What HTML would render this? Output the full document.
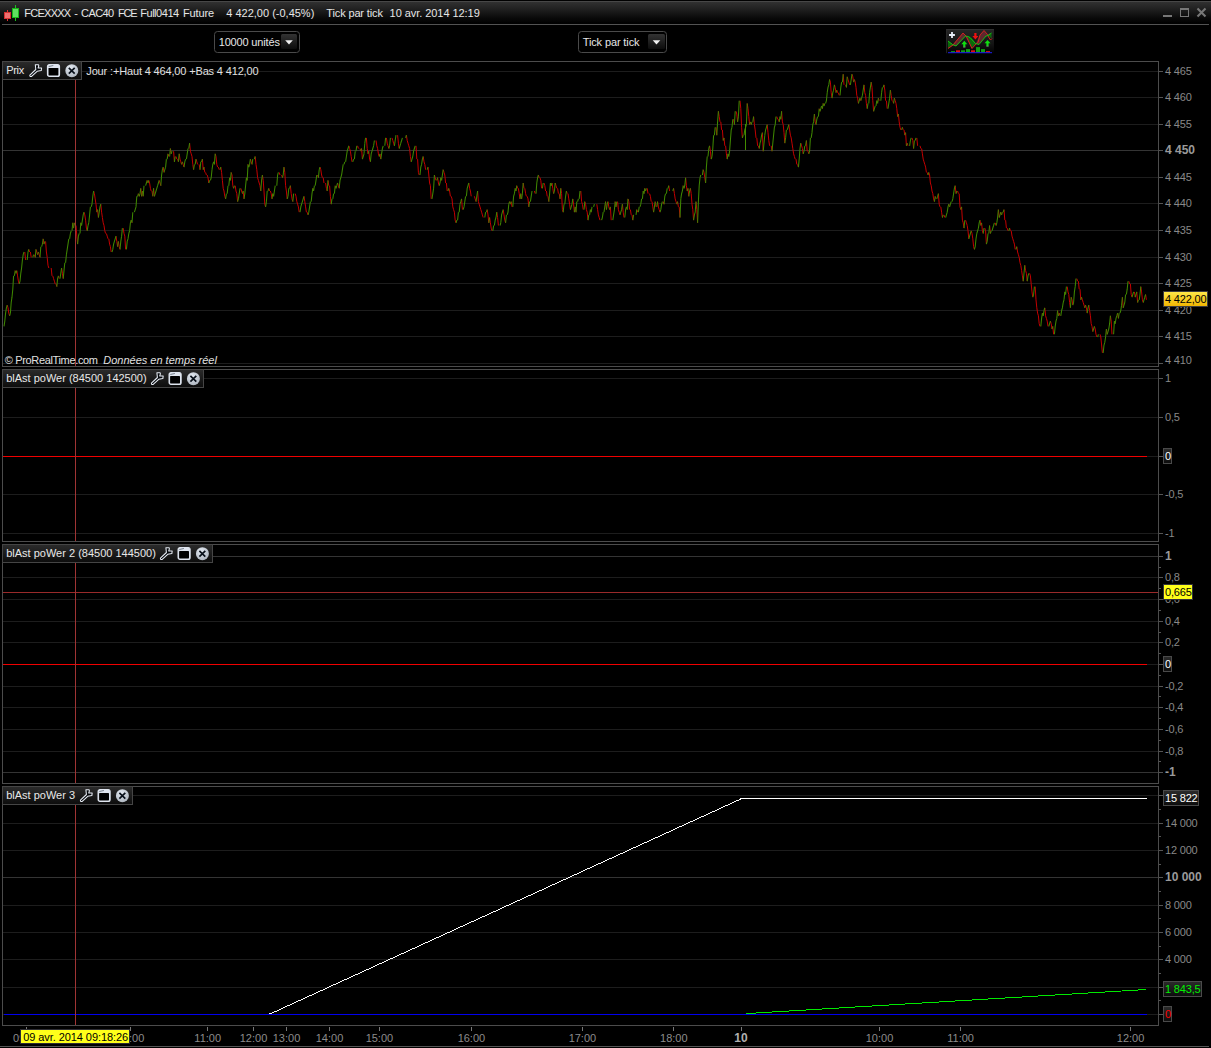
<!DOCTYPE html><html><head><meta charset="utf-8"><title>FCEXXXX - CAC40 FCE Full0414 Future</title>
<style>html,body{margin:0;padding:0;background:#000;overflow:hidden}svg{display:block}text{font-family:"Liberation Sans", Arial, sans-serif;font-size:11px}</style></head><body>
<svg width="1211" height="1048" viewBox="0 0 1211 1048">
<defs>
<linearGradient id="tb" x1="0" y1="0" x2="0" y2="1"><stop offset="0" stop-color="#313131"/><stop offset="0.3" stop-color="#212121"/><stop offset="0.7" stop-color="#0b0b0b"/><stop offset="0.95" stop-color="#000"/></linearGradient>
<linearGradient id="lb" x1="0" y1="0" x2="0" y2="1"><stop offset="0" stop-color="#2b2b2b"/><stop offset="1" stop-color="#0c0c0c"/></linearGradient>
<linearGradient id="bt" x1="0" y1="0" x2="0" y2="1"><stop offset="0" stop-color="#333"/><stop offset="1" stop-color="#0c0c0c"/></linearGradient>
<linearGradient id="yl" x1="0" y1="0" x2="0" y2="1"><stop offset="0" stop-color="#ffe94a"/><stop offset="1" stop-color="#f0b400"/></linearGradient>
<g id="ic-wrench"><path d="M0.95 11.1L6.9 5.5L6.4 0.8L9.55 0.7L9.9 1.9L9.2 3.9L12.7 3.9L12.35 6.6L8.2 7.3L2.7 12.4Q0.6 13.0 0.95 11.1Z" fill="#04070b" stroke="#e9eef6" stroke-width="1.05" stroke-linejoin="round"/></g>
<g id="ic-win"><rect x="0.6" y="0.6" width="12" height="12" rx="2" fill="#dfe5ef" stroke="#dfe5ef" stroke-width="1.2"/><rect x="1.6" y="4.1" width="9.9" height="7.4" rx="0.6" fill="#000"/><path d="M1.8 2.6L6.4 1.6" stroke="#5a6470" stroke-width="0.8"/></g>
<radialGradient id="cg" cx="0.4" cy="0.3" r="0.8"><stop offset="0" stop-color="#e4eaf2"/><stop offset="1" stop-color="#a9b1bb"/></radialGradient>
<g id="ic-close"><circle cx="6.6" cy="6.5" r="6.5" fill="url(#cg)"/><path d="M3.6 3.7L9.5 9.5M9.5 3.7L3.6 9.5" stroke="#08101a" stroke-width="1.7"/></g>
<linearGradient id="ib" x1="0" y1="0" x2="0" y2="1"><stop offset="0" stop-color="#262626"/><stop offset="0.6" stop-color="#141414"/><stop offset="1" stop-color="#000"/></linearGradient>
</defs>
<rect width="1211" height="1048" fill="#000"/>
<rect x="0" y="2" width="1211" height="22" fill="url(#tb)"/>
<rect x="0" y="1" width="1211" height="1" fill="#474747"/>
<rect x="2" y="24" width="1207" height="1" fill="#525252"/>
<rect x="7" y="10" width="1" height="11" fill="#e03030"/><rect x="4.5" y="12.5" width="6" height="6" fill="#f07070" stroke="#d83030" stroke-width="1"/>
<rect x="15" y="5" width="1" height="16" fill="#20c020"/><rect x="12.5" y="8.5" width="6" height="9" fill="#60e060" stroke="#18b818" stroke-width="1"/>
<text y="17" fill="#e6e6e6"><tspan x="24.3" textLength="46.9" lengthAdjust="spacing">FCEXXXX</tspan> <tspan x="74.2" textLength="3.9" lengthAdjust="spacing">-</tspan> <tspan x="81.0" textLength="33.2" lengthAdjust="spacing">CAC40</tspan> <tspan x="117.9" textLength="19.6" lengthAdjust="spacing">FCE</tspan> <tspan x="140.2" textLength="39.0" lengthAdjust="spacing">Full0414</tspan> <tspan x="183.0" textLength="31.2" lengthAdjust="spacing">Future</tspan></text>
<text x="226.3" y="17" fill="#e6e6e6"  textLength="88" lengthAdjust="spacing">4 422,00 (-0,45%)</text>
<text x="326.3" y="17" fill="#e6e6e6"  textLength="56.6" lengthAdjust="spacing">Tick par tick</text>
<text x="389.6" y="17" fill="#e6e6e6"  textLength="90.2" lengthAdjust="spacing">10 avr. 2014 12:19</text>
<rect x="1163" y="15" width="9" height="2" fill="#777"/>
<rect x="1180.5" y="8.5" width="8" height="8" fill="none" stroke="#777"/><rect x="1180" y="8" width="9" height="2" fill="#777"/>
<path d="M1197.5 8.5L1205.5 16.5M1205.5 8.5L1197.5 16.5" stroke="#777" stroke-width="2.1"/>
<rect x="214.5" y="31.5" width="85" height="21" rx="3" fill="#000" stroke="#4a4a4a"/>
<rect x="281" y="34" width="16" height="15" rx="1.5" fill="url(#bt)"/>
<path d="M285.2 40.2h7.6l-3.8 4.3z" fill="#f0f0f0"/>
<text x="218.7" y="46" fill="#e6e6e6"  textLength="61.2" lengthAdjust="spacing">10000 unités</text>
<rect x="578.5" y="31.5" width="88" height="21" rx="3" fill="#000" stroke="#4a4a4a"/>
<rect x="648" y="34" width="17" height="15" rx="1.5" fill="url(#bt)"/>
<path d="M652.7 40.2h7.6l-3.8 4.3z" fill="#f0f0f0"/>
<text x="582.7" y="46" fill="#e6e6e6"  textLength="56.8" lengthAdjust="spacing">Tick par tick</text>
<g transform="translate(946,29)">
<rect x="0" y="0" width="48" height="25" rx="1" fill="url(#ib)"/><rect x="0" y="0.2" width="48" height="0.8" fill="#333"/><rect x="0" y="0.2" width="0.8" height="24" fill="#2a2a2a"/>
<path d="M2 12 L7 15.5 L17 4 L20 7 L26 19.5 L30 14 L34 6 L38 1.5 L41.5 5.5 L46 9.5 L44 4 L40 7 L33 15.5 L30 14.5 L26.5 10.5 L22 7.5 L19.5 7 L10 17 L7 16.5 L2 19.5Z" fill="#6a2a30" opacity="0.85"/>
<path d="M2 12 L2 19 L6.5 15.5Z M21.5 7.5 L26 19 L29.5 14.5 L25 8.5Z M42 6.5 L45.5 4 L45.5 9 L42.5 7Z" fill="#0a6a0a"/>
<path d="M2 19.5 L7 16 L17 4 L20 7 L26 19.5 L30 15 L32 13.5 L34 6 L38 1.5 L41.5 5.5 L42.5 8 L44.5 11 L46 9.5" fill="none" stroke="#e02020" stroke-width="0.9"/>
<path d="M2 12 L6.5 15.5 L10 17 L19.5 7 L22 7.5 L24 8.5 L29.5 14.5 L33 15.5 L40 7 L42 6.5 L45.5 4" fill="none" stroke="#10d010" stroke-width="0.9"/>
<path d="M3.1 6h5.8M6 3.1v5.8" stroke="#e8eef8" stroke-width="1.8"/>
<path d="M17.2 18.2v-3h-1.9l3-3.4 3 3.4h-1.900v3z" fill="#10e010"/><rect x="17.2" y="17.6" width="2.2" height="0.9" fill="#777"/>
<path d="M40.400 17.3v-3h-1.900l3-3.4 3 3.4h-1.900v3z" fill="#10e010"/><rect x="40.4" y="16.700" width="2.2" height="0.9" fill="#777"/>
<path d="M28.300 4v3h-1.900l3 3.400 3-3.400h-1.900V4z" fill="#f01010"/>
<rect x="5" y="22.1" width="4" height="1.2" fill="#10a010"/>
<rect x="10" y="21.3" width="4" height="2" fill="#e01010"/>
<rect x="15" y="21.3" width="4" height="2" fill="#10a010"/>
<rect x="20" y="20.1" width="4" height="3.2" fill="#10a010"/>
<rect x="25" y="21.3" width="4" height="2" fill="#e01010"/>
<rect x="30" y="18.1" width="4" height="5.2" fill="#10a010"/>
<rect x="35" y="20.1" width="4" height="3.2" fill="#10a010"/>
<rect x="40" y="22.1" width="4" height="1.2" fill="#e01010"/>
<rect x="2" y="23.2" width="44" height="1" fill="#2020f0"/>
</g>
<rect x="3" y="71" width="1155" height="1" fill="#1d1d1d"/>
<rect x="3" y="97" width="1155" height="1" fill="#1d1d1d"/>
<rect x="3" y="124" width="1155" height="1" fill="#1d1d1d"/>
<rect x="3" y="150" width="1155" height="1" fill="#343434"/>
<rect x="3" y="177" width="1155" height="1" fill="#1d1d1d"/>
<rect x="3" y="203" width="1155" height="1" fill="#1d1d1d"/>
<rect x="3" y="230" width="1155" height="1" fill="#1d1d1d"/>
<rect x="3" y="257" width="1155" height="1" fill="#1d1d1d"/>
<rect x="3" y="283" width="1155" height="1" fill="#1d1d1d"/>
<rect x="3" y="310" width="1155" height="1" fill="#1d1d1d"/>
<rect x="3" y="336" width="1155" height="1" fill="#1d1d1d"/>
<rect x="3" y="363" width="1155" height="1" fill="#1d1d1d"/>
<rect x="1159" y="71" width="4" height="1" fill="#555"/>
<text x="1165" y="75" fill="#888888"  textLength="26.8" lengthAdjust="spacing">4 465</text>
<rect x="1159" y="97" width="4" height="1" fill="#555"/>
<text x="1165" y="101" fill="#888888"  textLength="26.8" lengthAdjust="spacing">4 460</text>
<rect x="1159" y="124" width="4" height="1" fill="#555"/>
<text x="1165" y="128" fill="#888888"  textLength="26.8" lengthAdjust="spacing">4 455</text>
<rect x="1159" y="150" width="4" height="1" fill="#555"/>
<text x="1165" y="154" fill="#9a9a9a" style="font-weight:bold;font-size:12px">4 450</text>
<rect x="1159" y="177" width="4" height="1" fill="#555"/>
<text x="1165" y="181" fill="#888888"  textLength="26.8" lengthAdjust="spacing">4 445</text>
<rect x="1159" y="203" width="4" height="1" fill="#555"/>
<text x="1165" y="207" fill="#888888"  textLength="26.8" lengthAdjust="spacing">4 440</text>
<rect x="1159" y="230" width="4" height="1" fill="#555"/>
<text x="1165" y="234" fill="#888888"  textLength="26.8" lengthAdjust="spacing">4 435</text>
<rect x="1159" y="257" width="4" height="1" fill="#555"/>
<text x="1165" y="261" fill="#888888"  textLength="26.8" lengthAdjust="spacing">4 430</text>
<rect x="1159" y="283" width="4" height="1" fill="#555"/>
<text x="1165" y="287" fill="#888888"  textLength="26.8" lengthAdjust="spacing">4 425</text>
<rect x="1159" y="310" width="4" height="1" fill="#555"/>
<text x="1165" y="314" fill="#888888"  textLength="26.8" lengthAdjust="spacing">4 420</text>
<rect x="1159" y="336" width="4" height="1" fill="#555"/>
<text x="1165" y="340" fill="#888888"  textLength="26.8" lengthAdjust="spacing">4 415</text>
<rect x="1159" y="363" width="4" height="1" fill="#555"/>
<text x="1165" y="363.6" fill="#888888"  textLength="26.8" lengthAdjust="spacing">4 410</text>
<rect x="2" y="61" width="1157" height="1" fill="#4c4c4c"/>
<rect x="2" y="366" width="1157" height="1" fill="#4c4c4c"/>
<rect x="2" y="61" width="1" height="306" fill="#4c4c4c"/>
<rect x="1158" y="61" width="1" height="306" fill="#4c4c4c"/>
<path d="M7.2 305.1L8.0 307.8M8.0 307.8L8.8 313.1M8.8 313.1L9.6 315.8M15.2 270.6L16.0 273.3M16.8 270.6L17.6 275.9M17.6 275.9L18.4 281.2M18.4 281.2L19.2 283.9M24.8 252.0L25.6 260.0M28.8 249.4L29.6 252.0M30.4 252.0L31.2 257.4M34.4 254.7L35.2 257.4M36.0 249.4L36.8 252.0M36.8 252.0L37.6 254.7M38.4 252.0L39.2 254.7M39.2 254.7L40.0 257.4M43.2 238.8L44.0 244.1M45.6 241.4L46.4 252.0M46.4 252.0L47.2 257.4M47.2 257.4L48.0 265.3M48.0 265.3L48.8 268.0M51.2 268.0L52.0 275.9M52.8 275.9L53.6 278.6M53.6 278.6L54.4 281.2M54.4 281.2L55.2 283.9M56.0 283.9L56.8 286.6M58.4 275.9L59.2 278.6M61.6 268.0L62.4 273.3M62.4 273.3L63.2 278.6M72.8 222.8L73.6 228.1M74.4 222.8L75.2 225.5M76.0 225.5L76.8 236.1M76.8 236.1L77.6 244.1M80.8 222.8L81.6 225.5M84.0 212.2L84.8 214.9M84.8 214.9L85.6 220.2M85.6 220.2L86.4 228.1M86.4 228.1L87.2 230.8M93.6 191.0L94.4 193.6M94.4 193.6L95.2 198.9M95.2 198.9L96.0 204.2M96.0 204.2L96.8 212.2M97.6 209.6L98.4 217.5M100.8 204.2L101.6 212.2M101.6 212.2L102.4 217.5M102.4 217.5L103.2 222.8M103.2 222.8L104.0 225.5M104.0 225.5L104.8 230.8M104.8 230.8L105.6 233.5M106.4 233.5L107.2 236.1M107.2 236.1L108.0 238.8M108.8 238.8L109.6 244.1M109.6 244.1L110.4 246.7M110.4 246.7L111.2 252.0M116.0 236.1L116.8 241.4M116.8 241.4L117.6 246.7M118.4 241.4L119.2 246.7M119.2 246.7L120.0 249.4M123.2 228.1L124.0 233.5M124.0 233.5L124.8 236.1M124.8 236.1L125.6 249.4M131.2 220.2L132.0 222.8M138.4 193.6L139.2 196.3M140.8 188.3L141.6 196.3M142.4 191.0L143.2 196.3M147.2 180.4L148.0 183.0M148.8 180.4L149.6 183.0M149.6 183.0L150.4 188.3M150.4 188.3L151.2 191.0M152.0 191.0L152.8 196.3M153.6 188.3L154.4 196.3M159.2 180.4L160.0 183.0M160.0 183.0L160.8 185.7M163.2 167.1L164.0 172.4M168.0 153.8L168.8 156.5M170.4 148.5L171.2 153.8M173.6 151.2L174.4 161.8M176.0 156.5L176.8 159.1M177.6 159.1L178.4 161.8M179.2 153.8L180.0 159.1M180.0 159.1L180.8 161.8M180.8 161.8L181.6 164.4M182.4 161.8L183.2 164.4M183.2 164.4L184.0 167.1M189.6 143.2L190.4 151.2M190.4 151.2L191.2 153.8M191.2 153.8L192.0 156.5M192.0 156.5L192.8 164.4M192.8 164.4L193.6 169.7M196.0 159.1L196.8 161.8M196.8 161.8L197.6 164.4M199.2 164.4L200.0 169.7M202.4 159.1L203.2 169.7M204.0 167.1L204.8 172.4M205.6 172.4L206.4 175.0M207.2 175.0L208.0 177.7M208.0 177.7L208.8 183.0M213.6 161.8L214.4 164.4M215.2 153.8L216.0 156.5M216.0 156.5L216.8 164.4M216.8 164.4L217.6 167.1M218.4 167.1L219.2 169.7M220.8 167.1L221.6 172.4M221.6 172.4L222.4 180.4M222.4 180.4L223.2 188.3M223.2 188.3L224.0 191.0M224.0 191.0L224.8 196.3M224.8 196.3L225.6 198.9M229.6 177.7L230.4 180.4M231.2 172.4L232.0 175.0M232.0 175.0L232.8 185.7M232.8 185.7L233.6 188.3M235.2 185.7L236.0 191.0M236.0 191.0L236.8 193.6M236.8 193.6L237.6 201.6M240.8 188.3L241.6 191.0M241.6 191.0L242.4 193.6M243.2 191.0L244.0 198.9M246.4 177.7L247.2 180.4M248.0 164.4L248.8 167.1M250.4 159.1L251.2 161.8M251.2 161.8L252.0 164.4M255.2 156.5L256.0 164.4M256.0 164.4L256.8 169.7M256.8 169.7L257.6 177.7M257.6 177.7L258.4 180.4M258.4 180.4L259.2 183.0M259.2 183.0L260.0 185.7M260.0 185.7L260.8 191.0M262.4 175.0L263.2 180.4M263.2 180.4L264.0 191.0M264.0 191.0L264.8 204.2M264.8 204.2L265.6 206.9M268.8 188.3L269.6 191.0M270.4 191.0L271.2 193.6M271.2 193.6L272.0 198.9M272.8 193.6L273.6 196.3M279.2 172.4L280.0 175.0M281.6 175.0L282.4 177.7M284.0 167.1L284.8 172.4M284.8 172.4L285.6 185.7M285.6 185.7L286.4 191.0M286.4 191.0L287.2 198.9M290.4 185.7L291.2 193.6M291.2 193.6L292.0 198.9M292.0 198.9L292.8 201.6M295.2 193.6L296.0 196.3M296.0 196.3L296.8 201.6M296.8 201.6L297.6 204.2M297.6 204.2L298.4 206.9M298.4 206.9L299.2 212.2M304.0 196.3L304.8 201.6M304.8 201.6L305.6 206.9M305.6 206.9L306.4 212.2M307.2 212.2L308.0 214.9M312.8 188.3L313.6 191.0M317.6 175.0L318.4 177.7M320.0 167.1L320.8 169.7M320.8 169.7L321.6 175.0M321.6 175.0L322.4 177.7M323.2 177.7L324.0 183.0M325.6 183.0L326.4 188.3M326.4 188.3L327.2 191.0M328.0 180.4L328.8 185.7M329.6 185.7L330.4 196.3M330.4 196.3L331.2 204.2M335.2 185.7L336.0 188.3M337.6 183.0L338.4 185.7M338.4 185.7L339.2 188.3M348.8 145.8L349.6 148.5M349.6 148.5L350.4 151.2M350.4 151.2L351.2 156.5M351.2 156.5L352.0 161.8M357.6 145.8L358.4 148.5M360.0 148.5L360.8 151.2M361.6 148.5L362.4 159.1M366.4 137.9L367.2 148.5M367.2 148.5L368.0 153.8M368.8 151.2L369.6 159.1M369.6 159.1L370.4 161.8M376.0 140.5L376.8 145.8M376.8 145.8L377.6 148.5M377.6 148.5L378.4 153.8M378.4 153.8L379.2 156.5M380.0 153.8L380.8 159.1M386.4 137.9L387.2 143.2M387.2 143.2L388.0 145.8M388.0 145.8L388.8 148.5M392.0 137.9L392.8 140.5M392.8 140.5L393.6 143.2M393.6 143.2L394.4 145.8M397.6 135.2L398.4 143.2M398.4 143.2L399.2 148.5M406.4 135.2L407.2 140.5M407.2 140.5L408.0 143.2M408.0 143.2L408.8 145.8M408.8 145.8L409.6 148.5M409.6 148.5L410.4 156.5M410.4 156.5L411.2 161.8M416.0 145.8L416.8 159.1M417.6 159.1L418.4 172.4M418.4 172.4L419.2 175.0M423.2 156.5L424.0 161.8M424.0 161.8L424.8 164.4M424.8 164.4L425.6 169.7M428.0 167.1L428.8 175.0M428.8 175.0L429.6 183.0M429.6 183.0L430.4 185.7M430.4 185.7L431.2 198.9M434.4 175.0L435.2 177.7M435.2 177.7L436.0 180.4M437.6 177.7L438.4 183.0M438.4 183.0L439.2 185.7M440.8 177.7L441.6 180.4M443.2 169.7L444.0 172.4M444.0 172.4L444.8 175.0M444.8 175.0L445.6 183.0M446.4 183.0L447.2 191.0M448.8 188.3L449.6 191.0M449.6 191.0L450.4 196.3M451.2 196.3L452.0 198.9M452.0 198.9L452.8 206.9M452.8 206.9L453.6 209.6M453.6 209.6L454.4 212.2M454.4 212.2L455.2 220.2M455.2 220.2L456.0 222.8M461.6 198.9L462.4 209.6M468.8 183.0L469.6 188.3M469.6 188.3L470.4 191.0M470.4 191.0L471.2 196.3M474.4 196.3L475.2 198.9M475.2 198.9L476.0 201.6M477.6 191.0L478.4 201.6M478.4 201.6L479.2 204.2M479.2 204.2L480.0 206.9M480.0 206.9L480.8 209.6M480.8 209.6L481.6 212.2M481.6 212.2L482.4 214.9M482.4 214.9L483.2 217.5M487.2 209.6L488.0 214.9M488.0 214.9L488.8 222.8M489.6 217.5L490.4 222.8M490.4 222.8L491.2 228.1M491.2 228.1L492.0 230.8M496.8 212.2L497.6 217.5M497.6 217.5L498.4 225.5M503.2 209.6L504.0 214.9M504.0 214.9L504.8 220.2M504.8 220.2L505.6 222.8M509.6 201.6L510.4 204.2M511.2 201.6L512.0 206.9M515.2 188.3L516.0 191.0M516.8 185.7L517.6 188.3M518.4 188.3L519.2 193.6M519.2 193.6L520.0 198.9M520.8 193.6L521.6 198.9M523.2 183.0L524.0 188.3M524.8 188.3L525.6 193.6M525.6 193.6L526.4 196.3M527.2 196.3L528.0 198.9M528.0 198.9L528.8 206.9M534.4 191.0L535.2 193.6M538.4 175.0L539.2 177.7M540.0 177.7L540.8 180.4M540.8 180.4L541.6 188.3M544.0 183.0L544.8 185.7M544.8 185.7L545.6 191.0M546.4 191.0L547.2 196.3M548.0 196.3L548.8 201.6M550.4 183.0L551.2 185.7M552.0 183.0L552.8 188.3M552.8 188.3L553.6 193.6M555.2 183.0L556.0 185.7M556.0 185.7L556.8 188.3M557.6 188.3L558.4 193.6M559.2 193.6L560.0 198.9M560.8 188.3L561.6 193.6M561.6 193.6L562.4 209.6M562.4 209.6L563.2 212.2M566.4 191.0L567.2 193.6M568.0 193.6L568.8 198.9M568.8 198.9L569.6 204.2M569.6 204.2L570.4 209.6M572.8 198.9L573.6 204.2M573.6 204.2L574.4 212.2M575.2 206.9L576.0 212.2M580.8 191.0L581.6 201.6M581.6 201.6L582.4 204.2M582.4 204.2L583.2 209.6M584.8 201.6L585.6 204.2M585.6 204.2L586.4 209.6M586.4 209.6L587.2 212.2M587.2 212.2L588.0 220.2M590.4 209.6L591.2 212.2M596.8 204.2L597.6 209.6M597.6 209.6L598.4 214.9M598.4 214.9L599.2 217.5M599.2 217.5L600.0 220.2M605.6 201.6L606.4 209.6M608.0 201.6L608.8 206.9M608.8 206.9L609.6 209.6M610.4 206.9L611.2 220.2M615.2 201.6L616.0 206.9M617.6 201.6L618.4 209.6M618.4 209.6L619.2 212.2M619.2 212.2L620.0 214.9M622.4 204.2L623.2 212.2M623.2 212.2L624.0 217.5M626.4 206.9L627.2 209.6M628.0 198.9L628.8 201.6M628.8 201.6L629.6 209.6M630.4 209.6L631.2 214.9M632.0 214.9L632.8 220.2M636.8 209.6L637.6 212.2M643.2 191.0L644.0 193.6M644.8 188.3L645.6 191.0M647.2 188.3L648.0 193.6M649.6 193.6L650.4 196.3M650.4 196.3L651.2 201.6M652.0 201.6L652.8 206.9M652.8 206.9L653.6 212.2M655.2 201.6L656.0 206.9M657.6 201.6L658.4 206.9M658.4 206.9L659.2 209.6M659.2 209.6L660.0 212.2M663.2 201.6L664.0 204.2M668.8 185.7L669.6 191.0M673.6 188.3L674.4 193.6M674.4 193.6L675.2 198.9M675.2 198.9L676.0 201.6M676.0 201.6L676.8 204.2M677.6 201.6L678.4 206.9M679.2 206.9L680.0 217.5M683.2 185.7L684.0 188.3M685.6 177.7L686.4 185.7M686.4 185.7L687.2 191.0M688.0 188.3L688.8 196.3M690.4 188.3L691.2 193.6M691.2 193.6L692.0 204.2M692.0 204.2L692.8 209.6M692.8 209.6L693.6 220.2M696.0 201.6L696.8 209.6M696.8 209.6L697.6 222.8M703.2 169.7L704.0 172.4M704.0 172.4L704.8 177.7M704.8 177.7L705.6 183.0M709.6 145.8L710.4 151.2M710.4 151.2L711.2 159.1M716.0 127.3L716.8 135.2M718.4 111.3L719.2 116.6M719.2 116.6L720.0 121.9M720.8 121.9L721.6 129.9M722.4 129.9L723.2 140.5M724.0 137.9L724.8 145.8M725.6 145.8L726.4 153.8M726.4 153.8L727.2 159.1M728.0 153.8L728.8 156.5M733.6 119.3L734.4 124.6M736.0 111.3L736.8 114.0M736.8 114.0L737.6 121.9M740.0 100.7L740.8 108.7M740.8 108.7L741.6 127.3M741.6 127.3L742.4 137.9M747.2 103.4L748.0 108.7M748.0 108.7L748.8 116.6M748.8 116.6L749.6 124.6M750.4 121.9L751.2 124.6M753.6 116.6L754.4 124.6M754.4 124.6L755.2 129.9M755.2 129.9L756.0 137.9M756.8 137.9L757.6 145.8M758.4 145.8L759.2 148.5M762.4 132.6L763.2 151.2M767.2 124.6L768.0 132.6M768.0 132.6L768.8 140.5M768.8 140.5L769.6 145.8M771.2 145.8L772.0 151.2M776.8 116.6L777.6 119.3M778.4 119.3L779.2 121.9M780.0 116.6L780.8 119.3M781.6 111.3L782.4 121.9M782.4 121.9L783.2 124.6M783.2 124.6L784.0 132.6M784.0 132.6L784.8 143.2M788.8 124.6L789.6 129.9M789.6 129.9L790.4 135.2M790.4 135.2L791.2 137.9M791.2 137.9L792.0 143.2M792.0 143.2L792.8 148.5M792.8 148.5L793.6 153.8M793.6 153.8L794.4 156.5M794.4 156.5L795.2 159.1M796.0 159.1L796.8 164.4M797.6 164.4L798.4 167.1M800.8 143.2L801.6 145.8M801.6 145.8L802.4 148.5M802.4 148.5L803.2 153.8M806.4 140.5L807.2 151.2M808.0 151.2L808.8 153.8M814.4 114.0L815.2 121.9M815.2 121.9L816.0 124.6M819.2 108.7L820.0 111.3M821.6 106.0L822.4 108.7M823.2 103.4L824.0 106.0M829.6 79.5L830.4 82.1M830.4 82.1L831.2 92.7M831.2 92.7L832.0 98.1M834.4 84.8L835.2 87.4M835.2 87.4L836.0 92.7M836.8 90.1L837.6 92.7M838.4 92.7L839.2 95.4M843.2 74.2L844.0 84.8M845.6 84.8L846.4 87.4M847.2 76.8L848.0 79.5M848.0 79.5L848.8 82.1M848.8 82.1L849.6 84.8M852.0 74.2L852.8 76.8M852.8 76.8L853.6 82.1M854.4 79.5L855.2 82.1M855.2 82.1L856.0 87.4M856.0 87.4L856.8 95.4M856.8 95.4L857.6 98.1M857.6 98.1L858.4 103.4M860.0 98.1L860.8 100.7M864.0 84.8L864.8 92.7M864.8 92.7L865.6 95.4M865.6 95.4L866.4 103.4M866.4 103.4L867.2 108.7M871.2 82.1L872.0 87.4M872.0 87.4L872.8 100.7M872.8 100.7L873.6 111.3M876.8 100.7L877.6 103.4M878.4 98.1L879.2 100.7M884.0 84.8L884.8 90.1M884.8 90.1L885.6 100.7M886.4 100.7L887.2 108.7M890.4 90.1L891.2 95.4M891.2 95.4L892.0 100.7M892.8 100.7L893.6 103.4M894.4 98.1L895.2 100.7M895.2 100.7L896.0 103.4M896.0 103.4L896.8 108.7M896.8 108.7L897.6 116.6M898.4 114.0L899.2 121.9M899.2 121.9L900.0 127.3M900.0 127.3L900.8 129.9M902.4 127.3L903.2 129.9M904.0 129.9L904.8 135.2M905.6 132.6L906.4 145.8M907.2 143.2L908.0 145.8M912.0 137.9L912.8 140.5M912.8 140.5L913.6 148.5M916.8 137.9L917.6 145.8M920.0 145.8L920.8 148.5M921.6 148.5L922.4 153.8M922.4 153.8L923.2 159.1M923.2 159.1L924.0 161.8M924.0 161.8L924.8 164.4M924.8 164.4L925.6 167.1M925.6 167.1L926.4 172.4M927.2 172.4L928.0 175.0M928.8 172.4L929.6 175.0M929.6 175.0L930.4 183.0M930.4 183.0L931.2 185.7M931.2 185.7L932.0 191.0M932.0 191.0L932.8 193.6M932.8 193.6L933.6 198.9M933.6 198.9L934.4 201.6M935.2 196.3L936.0 198.9M938.4 193.6L939.2 204.2M939.2 204.2L940.0 206.9M940.8 206.9L941.6 212.2M941.6 212.2L942.4 217.5M944.0 214.9L944.8 217.5M948.8 204.2L949.6 206.9M955.2 185.7L956.0 193.6M957.6 191.0L958.4 193.6M959.2 193.6L960.0 206.9M960.0 206.9L960.8 209.6M961.6 206.9L962.4 220.2M962.4 220.2L963.2 222.8M963.2 222.8L964.0 228.1M965.6 220.2L966.4 222.8M966.4 222.8L967.2 225.5M967.2 225.5L968.0 230.8M968.0 230.8L968.8 238.8M971.2 230.8L972.0 233.5M972.0 233.5L972.8 238.8M972.8 238.8L973.6 246.7M973.6 246.7L974.4 249.4M980.0 220.2L980.8 225.5M981.6 222.8L982.4 230.8M982.4 230.8L983.2 233.5M984.8 228.1L985.6 230.8M985.6 230.8L986.4 244.1M989.6 225.5L990.4 233.5M995.2 222.8L996.0 225.5M998.4 209.6L999.2 217.5M1000.8 212.2L1001.6 214.9M1004.0 209.6L1004.8 220.2M1005.6 220.2L1006.4 228.1M1007.2 228.1L1008.0 230.8M1009.6 228.1L1010.4 230.8M1011.2 230.8L1012.0 236.1M1012.0 236.1L1012.8 238.8M1012.8 238.8L1013.6 241.4M1013.6 241.4L1014.4 244.1M1014.4 244.1L1015.2 249.4M1016.8 246.7L1017.6 252.0M1017.6 252.0L1018.4 254.7M1018.4 254.7L1019.2 257.4M1019.2 257.4L1020.0 262.7M1020.0 262.7L1020.8 265.3M1020.8 265.3L1021.6 270.6M1021.6 270.6L1022.4 275.9M1022.4 275.9L1023.2 281.2M1024.8 265.3L1025.6 270.6M1025.6 270.6L1026.4 273.3M1026.4 273.3L1027.2 281.2M1029.6 273.3L1030.4 275.9M1030.4 275.9L1031.2 283.9M1031.2 283.9L1032.0 291.9M1032.0 291.9L1032.8 297.2M1035.2 286.6L1036.0 299.8M1036.0 299.8L1036.8 307.8M1036.8 307.8L1037.6 313.1M1037.6 313.1L1038.4 315.8M1038.4 315.8L1039.2 323.7M1039.2 323.7L1040.0 326.4M1042.4 313.1L1043.2 315.8M1044.8 307.8L1045.6 315.8M1045.6 315.8L1046.4 318.4M1046.4 318.4L1047.2 321.1M1047.2 321.1L1048.0 326.4M1050.4 321.1L1051.2 323.7M1051.2 323.7L1052.0 329.0M1052.8 326.4L1053.6 334.3M1057.6 310.5L1058.4 315.8M1059.2 313.1L1060.0 315.8M1064.8 291.9L1065.6 294.5M1067.2 286.6L1068.0 291.9M1068.0 291.9L1068.8 294.5M1068.8 294.5L1069.6 302.5M1069.6 302.5L1070.4 307.8M1071.2 297.2L1072.0 299.8M1072.0 299.8L1072.8 305.1M1076.8 278.6L1077.6 281.2M1078.4 281.2L1079.2 289.2M1080.0 289.2L1080.8 299.8M1081.6 297.2L1082.4 299.8M1082.4 299.8L1083.2 302.5M1083.2 302.5L1084.0 305.1M1084.0 305.1L1084.8 307.8M1085.6 305.1L1086.4 307.8M1086.4 307.8L1087.2 313.1M1088.8 305.1L1089.6 310.5M1089.6 310.5L1090.4 315.8M1090.4 315.8L1091.2 323.7M1091.2 323.7L1092.0 326.4M1092.0 326.4L1092.8 331.7M1094.4 326.4L1095.2 329.0M1095.2 329.0L1096.0 334.3M1096.0 334.3L1096.8 337.0M1100.0 334.3L1100.8 337.0M1100.8 337.0L1101.6 345.0M1101.6 345.0L1102.4 352.9M1106.4 329.0L1107.2 334.3M1110.4 315.8L1111.2 321.1M1111.2 321.1L1112.0 334.3M1114.4 321.1L1115.2 323.7M1117.6 313.1L1118.4 318.4M1122.4 297.2L1123.2 307.8M1128.8 281.2L1129.6 283.9M1130.4 283.9L1131.2 294.5M1131.2 294.5L1132.0 297.2M1134.4 291.9L1135.2 297.2M1136.8 291.9L1137.6 302.5M1140.8 286.6L1141.6 291.9M1141.6 291.9L1142.4 299.8M1142.4 299.8L1143.2 302.5M1145.6 294.5L1146.4 299.8" stroke="#c40000" fill="none" stroke-width="1"/>
<path d="M4.0 326.4L4.8 321.1M4.8 321.1L5.6 313.1M5.6 313.1L6.4 307.8M6.4 307.8L7.2 305.1M9.6 315.8L10.4 313.1M10.4 313.1L11.2 302.5M11.2 302.5L12.0 297.2M12.0 297.2L12.8 289.2M12.8 289.2L13.6 275.9M14.4 275.9L15.2 270.6M16.0 273.3L16.8 270.6M19.2 283.9L20.0 281.2M20.0 281.2L20.8 273.3M20.8 273.3L21.6 268.0M21.6 268.0L22.4 260.0M22.4 260.0L23.2 254.7M23.2 254.7L24.0 252.0M27.2 260.0L28.0 252.0M28.0 252.0L28.8 249.4M32.8 257.4L33.6 254.7M35.2 257.4L36.0 249.4M37.6 254.7L38.4 252.0M40.0 257.4L40.8 246.7M41.6 246.7L42.4 244.1M42.4 244.1L43.2 238.8M44.0 244.1L44.8 241.4M56.8 286.6L57.6 278.6M57.6 278.6L58.4 275.9M60.0 278.6L60.8 273.3M60.8 273.3L61.6 268.0M63.2 278.6L64.0 270.6M64.0 270.6L64.8 262.7M65.6 262.7L66.4 254.7M66.4 254.7L67.2 249.4M67.2 249.4L68.0 244.1M68.0 244.1L68.8 238.8M69.6 238.8L70.4 233.5M70.4 233.5L71.2 230.8M72.0 230.8L72.8 222.8M73.6 228.1L74.4 222.8M77.6 244.1L78.4 236.1M78.4 236.1L79.2 233.5M80.0 233.5L80.8 222.8M81.6 225.5L82.4 220.2M82.4 220.2L83.2 214.9M83.2 214.9L84.0 212.2M87.2 230.8L88.0 225.5M88.0 225.5L88.8 222.8M88.8 222.8L89.6 214.9M89.6 214.9L90.4 206.9M91.2 206.9L92.0 204.2M92.0 204.2L92.8 196.3M92.8 196.3L93.6 191.0M96.8 212.2L97.6 209.6M98.4 217.5L99.2 212.2M99.2 212.2L100.0 206.9M100.0 206.9L100.8 204.2M112.0 252.0L112.8 249.4M112.8 249.4L113.6 244.1M113.6 244.1L114.4 241.4M114.4 241.4L115.2 238.8M115.2 238.8L116.0 236.1M117.6 246.7L118.4 241.4M120.0 249.4L120.8 241.4M120.8 241.4L121.6 236.1M121.6 236.1L122.4 228.1M126.4 249.4L127.2 241.4M127.2 241.4L128.0 238.8M128.0 238.8L128.8 233.5M128.8 233.5L129.6 230.8M129.6 230.8L130.4 222.8M130.4 222.8L131.2 220.2M132.0 222.8L132.8 212.2M134.4 212.2L135.2 209.6M135.2 209.6L136.0 206.9M136.0 206.9L136.8 196.3M137.6 196.3L138.4 193.6M139.2 196.3L140.0 193.6M140.0 193.6L140.8 188.3M141.6 196.3L142.4 191.0M143.2 196.3L144.0 185.7M145.6 185.7L146.4 183.0M146.4 183.0L147.2 180.4M148.0 183.0L148.8 180.4M152.8 196.3L153.6 188.3M154.4 196.3L155.2 193.6M155.2 193.6L156.0 191.0M156.0 191.0L156.8 188.3M156.8 188.3L157.6 185.7M157.6 185.7L158.4 183.0M158.4 183.0L159.2 180.4M160.8 185.7L161.6 175.0M161.6 175.0L162.4 169.7M162.4 169.7L163.2 167.1M164.0 172.4L164.8 169.7M164.8 169.7L165.6 167.1M165.6 167.1L166.4 159.1M167.2 159.1L168.0 153.8M169.6 156.5L170.4 148.5M171.2 153.8L172.0 151.2M174.4 161.8L175.2 156.5M178.4 161.8L179.2 153.8M181.6 164.4L182.4 161.8M184.0 167.1L184.8 161.8M184.8 161.8L185.6 159.1M186.4 159.1L187.2 153.8M187.2 153.8L188.0 148.5M188.8 148.5L189.6 143.2M193.6 169.7L194.4 164.4M195.2 164.4L196.0 159.1M200.0 169.7L200.8 161.8M201.6 161.8L202.4 159.1M203.2 169.7L204.0 167.1M208.8 183.0L209.6 180.4M210.4 180.4L211.2 177.7M211.2 177.7L212.0 169.7M212.0 169.7L212.8 164.4M212.8 164.4L213.6 161.8M214.4 164.4L215.2 153.8M220.0 169.7L220.8 167.1M225.6 198.9L226.4 193.6M227.2 193.6L228.0 185.7M228.8 185.7L229.6 177.7M230.4 180.4L231.2 172.4M233.6 188.3L234.4 185.7M237.6 201.6L238.4 198.9M238.4 198.9L239.2 193.6M239.2 193.6L240.0 188.3M242.4 193.6L243.2 191.0M244.0 198.9L244.8 193.6M244.8 193.6L245.6 185.7M245.6 185.7L246.4 177.7M247.2 180.4L248.0 164.4M248.8 167.1L249.6 164.4M249.6 164.4L250.4 159.1M252.0 164.4L252.8 159.1M254.4 159.1L255.2 156.5M260.8 191.0L261.6 180.4M261.6 180.4L262.4 175.0M265.6 206.9L266.4 201.6M266.4 201.6L267.2 191.0M268.0 191.0L268.8 188.3M272.0 198.9L272.8 193.6M273.6 196.3L274.4 191.0M274.4 191.0L275.2 185.7M276.8 185.7L277.6 175.0M277.6 175.0L278.4 172.4M282.4 177.7L283.2 175.0M283.2 175.0L284.0 167.1M287.2 198.9L288.0 196.3M288.0 196.3L288.8 188.3M289.6 188.3L290.4 185.7M292.8 201.6L293.6 193.6M300.0 212.2L300.8 206.9M300.8 206.9L301.6 204.2M301.6 204.2L302.4 201.6M302.4 201.6L303.2 198.9M303.2 198.9L304.0 196.3M308.0 214.9L308.8 212.2M308.8 212.2L309.6 206.9M309.6 206.9L310.4 201.6M311.2 201.6L312.0 193.6M312.0 193.6L312.8 188.3M313.6 191.0L314.4 185.7M315.2 185.7L316.0 180.4M316.0 180.4L316.8 175.0M318.4 177.7L319.2 169.7M319.2 169.7L320.0 167.1M327.2 191.0L328.0 180.4M331.2 204.2L332.0 198.9M332.8 198.9L333.6 193.6M334.4 193.6L335.2 185.7M336.0 188.3L336.8 185.7M336.8 185.7L337.6 183.0M339.2 188.3L340.0 180.4M340.0 180.4L340.8 177.7M340.8 177.7L341.6 175.0M341.6 175.0L342.4 169.7M342.4 169.7L343.2 164.4M344.0 164.4L344.8 161.8M345.6 161.8L346.4 156.5M346.4 156.5L347.2 151.2M347.2 151.2L348.0 148.5M348.0 148.5L348.8 145.8M352.8 161.8L353.6 159.1M354.4 159.1L355.2 151.2M356.0 151.2L356.8 145.8M360.8 151.2L361.6 148.5M362.4 159.1L363.2 156.5M363.2 156.5L364.0 153.8M364.0 153.8L364.8 143.2M364.8 143.2L365.6 137.9M368.0 153.8L368.8 151.2M370.4 161.8L371.2 153.8M371.2 153.8L372.0 151.2M372.0 151.2L372.8 148.5M372.8 148.5L373.6 145.8M373.6 145.8L374.4 140.5M379.2 156.5L380.0 153.8M380.8 159.1L381.6 153.8M381.6 153.8L382.4 148.5M382.4 148.5L383.2 145.8M384.8 145.8L385.6 137.9M388.8 148.5L389.6 145.8M389.6 145.8L390.4 137.9M394.4 145.8L395.2 140.5M395.2 140.5L396.0 135.2M399.2 148.5L400.0 145.8M400.0 145.8L400.8 143.2M400.8 143.2L401.6 140.5M401.6 140.5L402.4 137.9M405.6 137.9L406.4 135.2M411.2 161.8L412.0 159.1M412.0 159.1L412.8 156.5M412.8 156.5L413.6 151.2M413.6 151.2L414.4 148.5M414.4 148.5L415.2 145.8M420.0 175.0L420.8 167.1M420.8 167.1L421.6 164.4M421.6 164.4L422.4 159.1M422.4 159.1L423.2 156.5M427.2 169.7L428.0 167.1M432.0 198.9L432.8 193.6M432.8 193.6L433.6 188.3M433.6 188.3L434.4 175.0M436.8 180.4L437.6 177.7M439.2 185.7L440.0 183.0M440.0 183.0L440.8 177.7M441.6 180.4L442.4 175.0M442.4 175.0L443.2 169.7M448.0 191.0L448.8 188.3M456.0 222.8L456.8 220.2M457.6 220.2L458.4 212.2M459.2 212.2L460.0 204.2M460.0 204.2L460.8 201.6M460.8 201.6L461.6 198.9M463.2 209.6L464.0 206.9M464.0 206.9L464.8 201.6M464.8 201.6L465.6 196.3M466.4 196.3L467.2 188.3M467.2 188.3L468.0 185.7M468.0 185.7L468.8 183.0M476.0 201.6L476.8 196.3M476.8 196.3L477.6 191.0M484.8 217.5L485.6 212.2M486.4 212.2L487.2 209.6M488.8 222.8L489.6 217.5M492.8 230.8L493.6 225.5M494.4 225.5L495.2 220.2M495.2 220.2L496.0 217.5M496.0 217.5L496.8 212.2M500.0 225.5L500.8 222.8M500.8 222.8L501.6 214.9M501.6 214.9L502.4 212.2M502.4 212.2L503.2 209.6M505.6 222.8L506.4 214.9M507.2 214.9L508.0 212.2M508.0 212.2L508.8 204.2M508.8 204.2L509.6 201.6M510.4 204.2L511.2 201.6M512.8 206.9L513.6 196.3M513.6 196.3L514.4 193.6M514.4 193.6L515.2 188.3M516.0 191.0L516.8 185.7M520.0 198.9L520.8 193.6M521.6 198.9L522.4 193.6M522.4 193.6L523.2 183.0M528.8 206.9L529.6 201.6M530.4 201.6L531.2 196.3M531.2 196.3L532.0 191.0M536.0 193.6L536.8 183.0M536.8 183.0L537.6 177.7M537.6 177.7L538.4 175.0M542.4 188.3L543.2 183.0M548.8 201.6L549.6 193.6M549.6 193.6L550.4 183.0M551.2 185.7L552.0 183.0M553.6 193.6L554.4 191.0M554.4 191.0L555.2 183.0M560.0 198.9L560.8 188.3M563.2 212.2L564.0 204.2M564.8 204.2L565.6 196.3M565.6 196.3L566.4 191.0M570.4 209.6L571.2 206.9M571.2 206.9L572.0 204.2M572.0 204.2L572.8 198.9M574.4 212.2L575.2 206.9M576.0 212.2L576.8 201.6M577.6 201.6L578.4 198.9M579.2 198.9L580.0 191.0M584.0 209.6L584.8 201.6M588.0 220.2L588.8 214.9M589.6 214.9L590.4 209.6M591.2 212.2L592.0 206.9M593.6 206.9L594.4 204.2M601.6 220.2L602.4 217.5M602.4 217.5L603.2 212.2M604.0 212.2L604.8 206.9M604.8 206.9L605.6 201.6M606.4 209.6L607.2 204.2M607.2 204.2L608.0 201.6M609.6 209.6L610.4 206.9M612.8 220.2L613.6 214.9M613.6 214.9L614.4 209.6M614.4 209.6L615.2 201.6M616.0 206.9L616.8 201.6M620.0 214.9L620.8 212.2M620.8 212.2L621.6 209.6M621.6 209.6L622.4 204.2M624.8 217.5L625.6 209.6M625.6 209.6L626.4 206.9M627.2 209.6L628.0 198.9M632.8 220.2L633.6 214.9M636.0 214.9L636.8 209.6M638.4 212.2L639.2 206.9M640.0 206.9L640.8 204.2M640.8 204.2L641.6 198.9M642.4 198.9L643.2 191.0M644.0 193.6L644.8 188.3M645.6 191.0L646.4 188.3M653.6 212.2L654.4 206.9M654.4 206.9L655.2 201.6M656.8 206.9L657.6 201.6M660.0 212.2L660.8 209.6M660.8 209.6L661.6 204.2M661.6 204.2L662.4 201.6M664.0 204.2L664.8 196.3M664.8 196.3L665.6 193.6M666.4 193.6L667.2 188.3M668.0 188.3L668.8 185.7M672.8 191.0L673.6 188.3M676.8 204.2L677.6 201.6M680.0 217.5L680.8 198.9M680.8 198.9L681.6 193.6M681.6 193.6L682.4 191.0M682.4 191.0L683.2 185.7M684.0 188.3L684.8 185.7M684.8 185.7L685.6 177.7M687.2 191.0L688.0 188.3M688.8 196.3L689.6 191.0M689.6 191.0L690.4 188.3M693.6 220.2L694.4 214.9M694.4 214.9L695.2 212.2M695.2 212.2L696.0 201.6M697.6 222.8L698.4 201.6M698.4 201.6L699.2 185.7M699.2 185.7L700.0 177.7M700.0 177.7L700.8 175.0M702.4 175.0L703.2 169.7M705.6 183.0L706.4 167.1M706.4 167.1L707.2 156.5M708.0 156.5L708.8 148.5M708.8 148.5L709.6 145.8M711.2 159.1L712.0 156.5M712.0 156.5L712.8 148.5M712.8 148.5L713.6 135.2M714.4 135.2L715.2 127.3M716.8 135.2L717.6 121.9M717.6 121.9L718.4 111.3M723.2 140.5L724.0 137.9M727.2 159.1L728.0 153.8M728.8 156.5L729.6 151.2M729.6 151.2L730.4 140.5M730.4 140.5L731.2 129.9M731.2 129.9L732.0 127.3M732.0 127.3L732.8 119.3M734.4 124.6L735.2 111.3M737.6 121.9L738.4 116.6M738.4 116.6L739.2 100.7M742.4 137.9L743.2 135.2M744.0 135.2L744.8 129.9M744.8 129.9L745.6 127.3M745.6 127.3L746.4 124.6M746.4 124.6L747.2 103.4M749.6 124.6L750.4 121.9M751.2 124.6L752.0 121.9M752.8 121.9L753.6 116.6M759.2 148.5L760.0 143.2M760.0 143.2L760.8 140.5M760.8 140.5L761.6 135.2M761.6 135.2L762.4 132.6M763.2 151.2L764.0 143.2M764.0 143.2L764.8 135.2M764.8 135.2L765.6 129.9M765.6 129.9L766.4 127.3M766.4 127.3L767.2 124.6M772.0 151.2L772.8 143.2M772.8 143.2L773.6 135.2M773.6 135.2L774.4 127.3M774.4 127.3L775.2 124.6M775.2 124.6L776.0 116.6M779.2 121.9L780.0 116.6M780.8 119.3L781.6 111.3M784.8 143.2L785.6 137.9M785.6 137.9L786.4 129.9M787.2 129.9L788.0 127.3M788.0 127.3L788.8 124.6M798.4 167.1L799.2 159.1M799.2 159.1L800.0 148.5M800.0 148.5L800.8 143.2M803.2 153.8L804.0 151.2M804.0 151.2L804.8 145.8M805.6 145.8L806.4 140.5M808.8 153.8L809.6 151.2M809.6 151.2L810.4 137.9M811.2 137.9L812.0 132.6M812.0 132.6L812.8 124.6M812.8 124.6L813.6 121.9M813.6 121.9L814.4 114.0M816.0 124.6L816.8 119.3M816.8 119.3L817.6 116.6M818.4 116.6L819.2 108.7M820.0 111.3L820.8 108.7M820.8 108.7L821.6 106.0M822.4 108.7L823.2 103.4M824.0 106.0L824.8 103.4M825.6 103.4L826.4 100.7M826.4 100.7L827.2 92.7M827.2 92.7L828.0 87.4M828.0 87.4L828.8 84.8M828.8 84.8L829.6 79.5M832.0 98.1L832.8 92.7M832.8 92.7L833.6 90.1M833.6 90.1L834.4 84.8M836.0 92.7L836.8 90.1M840.0 95.4L840.8 87.4M840.8 87.4L841.6 82.1M842.4 82.1L843.2 74.2M846.4 87.4L847.2 76.8M850.4 84.8L851.2 79.5M851.2 79.5L852.0 74.2M853.6 82.1L854.4 79.5M858.4 103.4L859.2 100.7M859.2 100.7L860.0 98.1M860.8 100.7L861.6 98.1M861.6 98.1L862.4 95.4M862.4 95.4L863.2 90.1M863.2 90.1L864.0 84.8M867.2 108.7L868.0 103.4M868.8 103.4L869.6 92.7M869.6 92.7L870.4 87.4M870.4 87.4L871.2 82.1M873.6 111.3L874.4 108.7M874.4 108.7L875.2 106.0M876.0 106.0L876.8 100.7M877.6 103.4L878.4 98.1M880.8 100.7L881.6 92.7M881.6 92.7L882.4 87.4M883.2 87.4L884.0 84.8M888.0 108.7L888.8 103.4M888.8 103.4L889.6 98.1M889.6 98.1L890.4 90.1M893.6 103.4L894.4 98.1M897.6 116.6L898.4 114.0M901.6 129.9L902.4 127.3M904.8 135.2L905.6 132.6M906.4 145.8L907.2 143.2M909.6 145.8L910.4 140.5M910.4 140.5L911.2 137.9M913.6 148.5L914.4 140.5M915.2 140.5L916.0 137.9M928.0 175.0L928.8 172.4M934.4 201.6L935.2 196.3M936.8 198.9L937.6 196.3M937.6 196.3L938.4 193.6M942.4 217.5L943.2 214.9M945.6 217.5L946.4 214.9M946.4 214.9L947.2 212.2M947.2 212.2L948.0 206.9M948.0 206.9L948.8 204.2M949.6 206.9L950.4 204.2M950.4 204.2L951.2 201.6M952.0 201.6L952.8 198.9M952.8 198.9L953.6 193.6M953.6 193.6L954.4 188.3M954.4 188.3L955.2 185.7M956.0 193.6L956.8 191.0M960.8 209.6L961.6 206.9M964.0 228.1L964.8 220.2M968.8 238.8L969.6 236.1M969.6 236.1L970.4 233.5M970.4 233.5L971.2 230.8M974.4 249.4L975.2 246.7M975.2 246.7L976.0 238.8M976.0 238.8L976.8 233.5M976.8 233.5L977.6 230.8M977.6 230.8L978.4 228.1M978.4 228.1L979.2 222.8M979.2 222.8L980.0 220.2M980.8 225.5L981.6 222.8M983.2 233.5L984.0 228.1M986.4 244.1L987.2 241.4M987.2 241.4L988.0 233.5M988.8 233.5L989.6 225.5M990.4 233.5L991.2 230.8M992.0 230.8L992.8 228.1M992.8 228.1L993.6 225.5M993.6 225.5L994.4 222.8M996.0 225.5L996.8 222.8M996.8 222.8L997.6 217.5M997.6 217.5L998.4 209.6M999.2 217.5L1000.0 214.9M1000.0 214.9L1000.8 212.2M1001.6 214.9L1002.4 212.2M1003.2 212.2L1004.0 209.6M1008.8 230.8L1009.6 228.1M1016.0 249.4L1016.8 246.7M1023.2 281.2L1024.0 273.3M1024.0 273.3L1024.8 265.3M1027.2 281.2L1028.0 275.9M1028.0 275.9L1028.8 273.3M1032.8 297.2L1033.6 294.5M1033.6 294.5L1034.4 286.6M1040.8 326.4L1041.6 318.4M1041.6 318.4L1042.4 313.1M1043.2 315.8L1044.0 310.5M1044.0 310.5L1044.8 307.8M1048.8 326.4L1049.6 323.7M1049.6 323.7L1050.4 321.1M1052.0 329.0L1052.8 326.4M1054.4 334.3L1055.2 326.4M1055.2 326.4L1056.0 321.1M1056.0 321.1L1056.8 318.4M1056.8 318.4L1057.6 310.5M1058.4 315.8L1059.2 313.1M1060.8 315.8L1061.6 310.5M1061.6 310.5L1062.4 307.8M1062.4 307.8L1063.2 302.5M1063.2 302.5L1064.0 299.8M1064.0 299.8L1064.8 291.9M1065.6 294.5L1066.4 286.6M1070.4 307.8L1071.2 297.2M1072.8 305.1L1073.6 302.5M1073.6 302.5L1074.4 291.9M1074.4 291.9L1075.2 286.6M1075.2 286.6L1076.0 278.6M1080.8 299.8L1081.6 297.2M1084.8 307.8L1085.6 305.1M1087.2 313.1L1088.0 307.8M1088.0 307.8L1088.8 305.1M1092.8 331.7L1093.6 329.0M1093.6 329.0L1094.4 326.4M1097.6 337.0L1098.4 334.3M1103.2 352.9L1104.0 345.0M1104.0 345.0L1104.8 342.3M1104.8 342.3L1105.6 337.0M1105.6 337.0L1106.4 329.0M1107.2 334.3L1108.0 331.7M1108.0 331.7L1108.8 329.0M1108.8 329.0L1109.6 323.7M1109.6 323.7L1110.4 315.8M1113.6 334.3L1114.4 321.1M1115.2 323.7L1116.0 318.4M1116.0 318.4L1116.8 315.8M1116.8 315.8L1117.6 313.1M1118.4 318.4L1119.2 313.1M1120.0 313.1L1120.8 310.5M1120.8 310.5L1121.6 305.1M1121.6 305.1L1122.4 297.2M1123.2 307.8L1124.0 305.1M1124.0 305.1L1124.8 302.5M1124.8 302.5L1125.6 294.5M1126.4 294.5L1127.2 289.2M1127.2 289.2L1128.0 281.2M1132.0 297.2L1132.8 294.5M1132.8 294.5L1133.6 291.9M1135.2 297.2L1136.0 294.5M1136.0 294.5L1136.8 291.9M1137.6 302.5L1138.4 299.8M1139.2 299.8L1140.0 294.5M1140.0 294.5L1140.8 286.6M1143.2 302.5L1144.0 299.8M1144.0 299.8L1144.8 297.2M1144.8 297.2L1145.6 294.5" stroke="#3e8600" fill="none" stroke-width="1.05"/>
<rect x="745" y="124" width="1" height="26" fill="#438c00"/>
<rect x="3" y="378" width="1155" height="1" fill="#1d1d1d"/>
<rect x="3" y="417" width="1155" height="1" fill="#1d1d1d"/>
<rect x="3" y="456" width="1155" height="1" fill="#1d1d1d"/>
<rect x="3" y="494" width="1155" height="1" fill="#1d1d1d"/>
<rect x="3" y="533" width="1155" height="1" fill="#1d1d1d"/>
<rect x="1159" y="378" width="4" height="1" fill="#555"/>
<text x="1165" y="382" fill="#888888"  textLength="5.9" lengthAdjust="spacing">1</text>
<rect x="1159" y="417" width="4" height="1" fill="#555"/>
<text x="1165" y="421" fill="#888888"  textLength="14.9" lengthAdjust="spacing">0,5</text>
<rect x="1159" y="456" width="4" height="1" fill="#555"/>
<rect x="1159" y="494" width="4" height="1" fill="#555"/>
<text x="1165" y="498" fill="#888888"  textLength="18.4" lengthAdjust="spacing">-0,5</text>
<rect x="1159" y="533" width="4" height="1" fill="#555"/>
<text x="1165" y="537" fill="#888888"  textLength="9.5" lengthAdjust="spacing">-1</text>
<rect x="2" y="369" width="1157" height="1" fill="#4c4c4c"/>
<rect x="2" y="541" width="1157" height="1" fill="#4c4c4c"/>
<rect x="2" y="369" width="1" height="173" fill="#4c4c4c"/>
<rect x="1158" y="369" width="1" height="173" fill="#4c4c4c"/>
<rect x="3" y="456" width="1144" height="1" fill="#f00000"/>
<rect x="3" y="556" width="1155" height="1" fill="#343434"/>
<rect x="3" y="577" width="1155" height="1" fill="#1d1d1d"/>
<rect x="3" y="599" width="1155" height="1" fill="#1d1d1d"/>
<rect x="3" y="621" width="1155" height="1" fill="#1d1d1d"/>
<rect x="3" y="642" width="1155" height="1" fill="#1d1d1d"/>
<rect x="3" y="664" width="1155" height="1" fill="#1d1d1d"/>
<rect x="3" y="686" width="1155" height="1" fill="#1d1d1d"/>
<rect x="3" y="707" width="1155" height="1" fill="#1d1d1d"/>
<rect x="3" y="729" width="1155" height="1" fill="#1d1d1d"/>
<rect x="3" y="751" width="1155" height="1" fill="#1d1d1d"/>
<rect x="3" y="772" width="1155" height="1" fill="#343434"/>
<rect x="1159" y="556" width="4" height="1" fill="#555"/>
<text x="1165" y="560" fill="#9a9a9a" style="font-weight:bold;font-size:12px">1</text>
<rect x="1159" y="577" width="4" height="1" fill="#555"/>
<text x="1165" y="581" fill="#888888"  textLength="14.9" lengthAdjust="spacing">0,8</text>
<rect x="1159" y="599" width="4" height="1" fill="#555"/>
<text x="1165" y="603" fill="#888888"  textLength="14.9" lengthAdjust="spacing">0,6</text>
<rect x="1159" y="621" width="4" height="1" fill="#555"/>
<text x="1165" y="625" fill="#888888"  textLength="14.9" lengthAdjust="spacing">0,4</text>
<rect x="1159" y="642" width="4" height="1" fill="#555"/>
<text x="1165" y="646" fill="#888888"  textLength="14.9" lengthAdjust="spacing">0,2</text>
<rect x="1159" y="664" width="4" height="1" fill="#555"/>
<rect x="1159" y="686" width="4" height="1" fill="#555"/>
<text x="1165" y="690" fill="#888888"  textLength="18.4" lengthAdjust="spacing">-0,2</text>
<rect x="1159" y="707" width="4" height="1" fill="#555"/>
<text x="1165" y="711" fill="#888888"  textLength="18.4" lengthAdjust="spacing">-0,4</text>
<rect x="1159" y="729" width="4" height="1" fill="#555"/>
<text x="1165" y="733" fill="#888888"  textLength="18.4" lengthAdjust="spacing">-0,6</text>
<rect x="1159" y="751" width="4" height="1" fill="#555"/>
<text x="1165" y="755" fill="#888888"  textLength="18.4" lengthAdjust="spacing">-0,8</text>
<rect x="1159" y="772" width="4" height="1" fill="#555"/>
<text x="1165" y="776" fill="#9a9a9a" style="font-weight:bold;font-size:12px">-1</text>
<rect x="1159" y="567" width="2" height="1" fill="#555"/>
<rect x="1159" y="588" width="2" height="1" fill="#555"/>
<rect x="1159" y="610" width="2" height="1" fill="#555"/>
<rect x="1159" y="632" width="2" height="1" fill="#555"/>
<rect x="1159" y="653" width="2" height="1" fill="#555"/>
<rect x="1159" y="675" width="2" height="1" fill="#555"/>
<rect x="1159" y="696" width="2" height="1" fill="#555"/>
<rect x="1159" y="718" width="2" height="1" fill="#555"/>
<rect x="1159" y="740" width="2" height="1" fill="#555"/>
<rect x="1159" y="761" width="2" height="1" fill="#555"/>
<rect x="2" y="544" width="1157" height="1" fill="#4c4c4c"/>
<rect x="2" y="783" width="1157" height="1" fill="#4c4c4c"/>
<rect x="2" y="544" width="1" height="240" fill="#4c4c4c"/>
<rect x="1158" y="544" width="1" height="240" fill="#4c4c4c"/>
<rect x="3" y="592" width="1155" height="1" fill="#9a2a2a"/>
<rect x="3" y="664" width="1144" height="1" fill="#f00000"/>
<rect x="3" y="795" width="1155" height="1" fill="#1d1d1d"/>
<rect x="3" y="823" width="1155" height="1" fill="#1d1d1d"/>
<rect x="3" y="850" width="1155" height="1" fill="#1d1d1d"/>
<rect x="3" y="877" width="1155" height="1" fill="#343434"/>
<rect x="3" y="905" width="1155" height="1" fill="#1d1d1d"/>
<rect x="3" y="932" width="1155" height="1" fill="#1d1d1d"/>
<rect x="3" y="959" width="1155" height="1" fill="#1d1d1d"/>
<rect x="3" y="987" width="1155" height="1" fill="#1d1d1d"/>
<rect x="3" y="1014" width="1155" height="1" fill="#1d1d1d"/>
<rect x="1159" y="795" width="4" height="1" fill="#555"/>
<rect x="1159" y="823" width="4" height="1" fill="#555"/>
<text x="1165" y="827" fill="#888888"  textLength="32.7" lengthAdjust="spacing">14 000</text>
<rect x="1159" y="850" width="4" height="1" fill="#555"/>
<text x="1165" y="854" fill="#888888"  textLength="32.7" lengthAdjust="spacing">12 000</text>
<rect x="1159" y="877" width="4" height="1" fill="#555"/>
<text x="1165" y="881" fill="#9a9a9a" style="font-weight:bold;font-size:12px">10 000</text>
<rect x="1159" y="905" width="4" height="1" fill="#555"/>
<text x="1165" y="909" fill="#888888"  textLength="26.8" lengthAdjust="spacing">8 000</text>
<rect x="1159" y="932" width="4" height="1" fill="#555"/>
<text x="1165" y="936" fill="#888888"  textLength="26.8" lengthAdjust="spacing">6 000</text>
<rect x="1159" y="959" width="4" height="1" fill="#555"/>
<text x="1165" y="963" fill="#888888"  textLength="26.8" lengthAdjust="spacing">4 000</text>
<rect x="1159" y="987" width="4" height="1" fill="#555"/>
<text x="1165" y="991" fill="#888888"  textLength="26.8" lengthAdjust="spacing">2 000</text>
<rect x="1159" y="1014" width="4" height="1" fill="#555"/>
<rect x="1159" y="809" width="2" height="1" fill="#555"/>
<rect x="1159" y="836" width="2" height="1" fill="#555"/>
<rect x="1159" y="864" width="2" height="1" fill="#555"/>
<rect x="1159" y="891" width="2" height="1" fill="#555"/>
<rect x="1159" y="918" width="2" height="1" fill="#555"/>
<rect x="1159" y="946" width="2" height="1" fill="#555"/>
<rect x="1159" y="973" width="2" height="1" fill="#555"/>
<rect x="1159" y="1000" width="2" height="1" fill="#555"/>
<rect x="2" y="786" width="1157" height="1" fill="#4c4c4c"/>
<rect x="2" y="1025" width="1157" height="1" fill="#4c4c4c"/>
<rect x="2" y="786" width="1" height="240" fill="#4c4c4c"/>
<rect x="1158" y="786" width="1" height="240" fill="#4c4c4c"/>
<rect x="4" y="1014" width="1143" height="1" fill="#0000ee"/>
<path d="M739 799h2v1h-2zM736 800h3v1h-3zM734 801h2v1h-2zM732 802h2v1h-2zM730 803h2v1h-2zM728 804h2v1h-2zM725 805h3v1h-3zM723 806h2v1h-2zM721 807h2v1h-2zM719 808h2v1h-2zM717 809h2v1h-2zM715 810h2v1h-2zM712 811h3v1h-3zM710 812h2v1h-2zM708 813h2v1h-2zM706 814h2v1h-2zM704 815h2v1h-2zM701 816h3v1h-3zM699 817h2v1h-2zM697 818h2v1h-2zM695 819h2v1h-2zM693 820h2v1h-2zM690 821h3v1h-3zM688 822h2v1h-2zM686 823h2v1h-2zM684 824h2v1h-2zM682 825h2v1h-2zM679 826h3v1h-3zM677 827h2v1h-2zM675 828h2v1h-2zM673 829h2v1h-2zM671 830h2v1h-2zM669 831h2v1h-2zM666 832h3v1h-3zM664 833h2v1h-2zM662 834h2v1h-2zM660 835h2v1h-2zM658 836h2v1h-2zM655 837h3v1h-3zM653 838h2v1h-2zM651 839h2v1h-2zM649 840h2v1h-2zM647 841h2v1h-2zM644 842h3v1h-3zM642 843h2v1h-2zM640 844h2v1h-2zM638 845h2v1h-2zM636 846h2v1h-2zM633 847h3v1h-3zM631 848h2v1h-2zM629 849h2v1h-2zM627 850h2v1h-2zM625 851h2v1h-2zM623 852h2v1h-2zM620 853h3v1h-3zM618 854h2v1h-2zM616 855h2v1h-2zM614 856h2v1h-2zM612 857h2v1h-2zM609 858h3v1h-3zM607 859h2v1h-2zM605 860h2v1h-2zM603 861h2v1h-2zM601 862h2v1h-2zM598 863h3v1h-3zM596 864h2v1h-2zM594 865h2v1h-2zM592 866h2v1h-2zM590 867h2v1h-2zM587 868h3v1h-3zM585 869h2v1h-2zM583 870h2v1h-2zM581 871h2v1h-2zM579 872h2v1h-2zM577 873h2v1h-2zM574 874h3v1h-3zM572 875h2v1h-2zM570 876h2v1h-2zM568 877h2v1h-2zM566 878h2v1h-2zM563 879h3v1h-3zM561 880h2v1h-2zM559 881h2v1h-2zM557 882h2v1h-2zM555 883h2v1h-2zM552 884h3v1h-3zM550 885h2v1h-2zM548 886h2v1h-2zM546 887h2v1h-2zM544 888h2v1h-2zM542 889h2v1h-2zM539 890h3v1h-3zM537 891h2v1h-2zM535 892h2v1h-2zM533 893h2v1h-2zM531 894h2v1h-2zM528 895h3v1h-3zM526 896h2v1h-2zM524 897h2v1h-2zM522 898h2v1h-2zM520 899h2v1h-2zM517 900h3v1h-3zM515 901h2v1h-2zM513 902h2v1h-2zM511 903h2v1h-2zM509 904h2v1h-2zM506 905h3v1h-3zM504 906h2v1h-2zM502 907h2v1h-2zM500 908h2v1h-2zM498 909h2v1h-2zM496 910h2v1h-2zM493 911h3v1h-3zM491 912h2v1h-2zM489 913h2v1h-2zM487 914h2v1h-2zM485 915h2v1h-2zM482 916h3v1h-3zM480 917h2v1h-2zM478 918h2v1h-2zM476 919h2v1h-2zM474 920h2v1h-2zM471 921h3v1h-3zM469 922h2v1h-2zM467 923h2v1h-2zM465 924h2v1h-2zM463 925h2v1h-2zM460 926h3v1h-3zM458 927h2v1h-2zM456 928h2v1h-2zM454 929h2v1h-2zM452 930h2v1h-2zM450 931h2v1h-2zM447 932h3v1h-3zM445 933h2v1h-2zM443 934h2v1h-2zM441 935h2v1h-2zM439 936h2v1h-2zM436 937h3v1h-3zM434 938h2v1h-2zM432 939h2v1h-2zM430 940h2v1h-2zM428 941h2v1h-2zM425 942h3v1h-3zM423 943h2v1h-2zM421 944h2v1h-2zM419 945h2v1h-2zM417 946h2v1h-2zM415 947h2v1h-2zM412 948h3v1h-3zM410 949h2v1h-2zM408 950h2v1h-2zM406 951h2v1h-2zM404 952h2v1h-2zM401 953h3v1h-3zM399 954h2v1h-2zM397 955h2v1h-2zM395 956h2v1h-2zM393 957h2v1h-2zM390 958h3v1h-3zM388 959h2v1h-2zM386 960h2v1h-2zM384 961h2v1h-2zM382 962h2v1h-2zM379 963h3v1h-3zM377 964h2v1h-2zM375 965h2v1h-2zM373 966h2v1h-2zM371 967h2v1h-2zM369 968h2v1h-2zM366 969h3v1h-3zM364 970h2v1h-2zM362 971h2v1h-2zM360 972h2v1h-2zM358 973h2v1h-2zM355 974h3v1h-3zM353 975h2v1h-2zM351 976h2v1h-2zM349 977h2v1h-2zM347 978h2v1h-2zM344 979h3v1h-3zM342 980h2v1h-2zM340 981h2v1h-2zM338 982h2v1h-2zM336 983h2v1h-2zM333 984h3v1h-3zM331 985h2v1h-2zM329 986h2v1h-2zM327 987h2v1h-2zM325 988h2v1h-2zM323 989h2v1h-2zM320 990h3v1h-3zM318 991h2v1h-2zM316 992h2v1h-2zM314 993h2v1h-2zM312 994h2v1h-2zM309 995h3v1h-3zM307 996h2v1h-2zM305 997h2v1h-2zM303 998h2v1h-2zM301 999h2v1h-2zM298 1000h3v1h-3zM296 1001h2v1h-2zM294 1002h2v1h-2zM292 1003h2v1h-2zM290 1004h2v1h-2zM287 1005h3v1h-3zM285 1006h2v1h-2zM283 1007h2v1h-2zM281 1008h2v1h-2zM279 1009h2v1h-2zM277 1010h2v1h-2zM274 1011h3v1h-3zM272 1012h2v1h-2zM269 1013h3v1h-3z" fill="#fff" shape-rendering="crispEdges"/>
<rect x="740" y="798" width="407" height="1" fill="#fff"/>
<path d="M746 1013.6L1146.5 989.5" fill="none" stroke="#00e800" stroke-width="1" shape-rendering="crispEdges"/>
<rect x="75" y="62" width="1" height="304" fill="#a03434"/>
<rect x="75" y="370" width="1" height="171" fill="#a03434"/>
<rect x="75" y="545" width="1" height="238" fill="#a03434"/>
<rect x="75" y="787" width="1" height="238" fill="#a03434"/>
<rect x="2.5" y="61.5" width="79" height="18" fill="url(#lb)" stroke="#454545"/>
<text x="6.2" y="74" fill="#e8e8e8"  textLength="18" lengthAdjust="spacing">Prix</text>
<use href="#ic-wrench" x="28.9" y="64"/>
<use href="#ic-win" x="46.9" y="63.9"/>
<use href="#ic-close" x="65.19999999999999" y="64.2"/>
<text x="86.3" y="75" fill="#e0e0e0"  textLength="172.3" lengthAdjust="spacing">Jour :+Haut 4 464,00 +Bas 4 412,00</text>
<text x="4.8" y="364" fill="#e0e0e0"  textLength="93.2" lengthAdjust="spacing">© ProRealTime.com</text>
<text x="103.3" y="364" fill="#e0e0e0" font-style="italic" textLength="113.6" lengthAdjust="spacing">Données en temps réel</text>
<rect x="2.5" y="369.5" width="201" height="18" fill="url(#lb)" stroke="#454545"/>
<text x="6.2" y="382" fill="#e8e8e8" >blAst poWer (84500 142500)</text>
<use href="#ic-wrench" x="150.5" y="372"/>
<use href="#ic-win" x="168.5" y="371.9"/>
<use href="#ic-close" x="186.8" y="372.2"/>
<rect x="2.5" y="544.5" width="210" height="18" fill="url(#lb)" stroke="#454545"/>
<text x="6.2" y="557" fill="#e8e8e8" >blAst poWer 2 (84500 144500)</text>
<use href="#ic-wrench" x="159.5" y="547"/>
<use href="#ic-win" x="177.5" y="546.9"/>
<use href="#ic-close" x="195.8" y="547.2"/>
<rect x="2.5" y="786.5" width="130" height="18" fill="url(#lb)" stroke="#454545"/>
<text x="6.2" y="799" fill="#e8e8e8" >blAst poWer 3</text>
<use href="#ic-wrench" x="79.5" y="789"/>
<use href="#ic-win" x="97.5" y="788.9"/>
<use href="#ic-close" x="115.8" y="789.2"/>
<rect x="1163.5" y="291.5" width="44" height="15" fill="url(#yl)" stroke="#3c3c40"/>
<text x="1165" y="303" fill="#000"  textLength="41.6" lengthAdjust="spacing">4 422,00</text>
<rect x="1163.5" y="448.5" width="8" height="15" fill="url(#lb)" stroke="#4a4a4a"/>
<text x="1165" y="460" fill="#fff" >0</text>
<rect x="1163.5" y="584.5" width="29" height="15" fill="#ffff1a" stroke="#33333a"/>
<text x="1165" y="596" fill="#000"  textLength="26.8" lengthAdjust="spacing">0,665</text>
<rect x="1163.5" y="656.5" width="8" height="15" fill="url(#lb)" stroke="#4a4a4a"/>
<text x="1165" y="668" fill="#fff" >0</text>
<rect x="1163.5" y="790.5" width="35" height="15" fill="url(#lb)" stroke="#4a4a4a"/>
<text x="1165" y="802" fill="#fff"  textLength="32.7" lengthAdjust="spacing">15 822</text>
<rect x="1163.5" y="981.5" width="38" height="15" fill="url(#lb)" stroke="#4a4a4a"/>
<text x="1165" y="993" fill="#00f000"  textLength="35.7" lengthAdjust="spacing">1 843,5</text>
<rect x="1163.5" y="1006.5" width="8" height="15" fill="url(#lb)" stroke="#4a4a4a"/>
<text x="1165" y="1018" fill="#ff0000" >0</text>
<rect x="26" y="1027" width="1" height="4" fill="#777"/>
<text x="26.8" y="1042" fill="#8c8c8c" text-anchor="middle">09:00</text>
<rect x="130" y="1027" width="1" height="4" fill="#777"/>
<text x="130.5" y="1042" fill="#8c8c8c" text-anchor="middle">10:00</text>
<rect x="207" y="1027" width="1" height="4" fill="#777"/>
<text x="207.7" y="1042" fill="#8c8c8c" text-anchor="middle">11:00</text>
<rect x="253" y="1027" width="1" height="4" fill="#777"/>
<text x="253.5" y="1042" fill="#8c8c8c" text-anchor="middle">12:00</text>
<rect x="286" y="1027" width="1" height="4" fill="#777"/>
<text x="286.5" y="1042" fill="#8c8c8c" text-anchor="middle">13:00</text>
<rect x="329" y="1027" width="1" height="4" fill="#777"/>
<text x="329.5" y="1042" fill="#8c8c8c" text-anchor="middle">14:00</text>
<rect x="379" y="1027" width="1" height="4" fill="#777"/>
<text x="379.4" y="1042" fill="#8c8c8c" text-anchor="middle">15:00</text>
<rect x="471" y="1027" width="1" height="4" fill="#777"/>
<text x="471.4" y="1042" fill="#8c8c8c" text-anchor="middle">16:00</text>
<rect x="582" y="1027" width="1" height="4" fill="#777"/>
<text x="582.4" y="1042" fill="#8c8c8c" text-anchor="middle">17:00</text>
<rect x="673" y="1027" width="1" height="4" fill="#777"/>
<text x="673.8" y="1042" fill="#8c8c8c" text-anchor="middle">18:00</text>
<rect x="741" y="1027" width="1" height="4" fill="#777"/>
<text x="741" y="1042" fill="#b0b0b0" text-anchor="middle" style="font-weight:bold;font-size:12px">10</text>
<rect x="879" y="1027" width="1" height="4" fill="#777"/>
<text x="879.5" y="1042" fill="#8c8c8c" text-anchor="middle">10:00</text>
<rect x="960" y="1027" width="1" height="4" fill="#777"/>
<text x="960.6" y="1042" fill="#8c8c8c" text-anchor="middle">11:00</text>
<rect x="1130" y="1027" width="1" height="4" fill="#777"/>
<text x="1130.6" y="1042" fill="#8c8c8c" text-anchor="middle">12:00</text>
<rect x="20.5" y="1029.5" width="109" height="14" fill="#ffff1a" stroke="#2c2c34"/>
<text x="23.2" y="1041" fill="#000"  textLength="105" lengthAdjust="spacing">09 avr. 2014 09:18:26</text>
<rect x="0" y="1046" width="1209" height="1" fill="#555"/>
</svg></body></html>
